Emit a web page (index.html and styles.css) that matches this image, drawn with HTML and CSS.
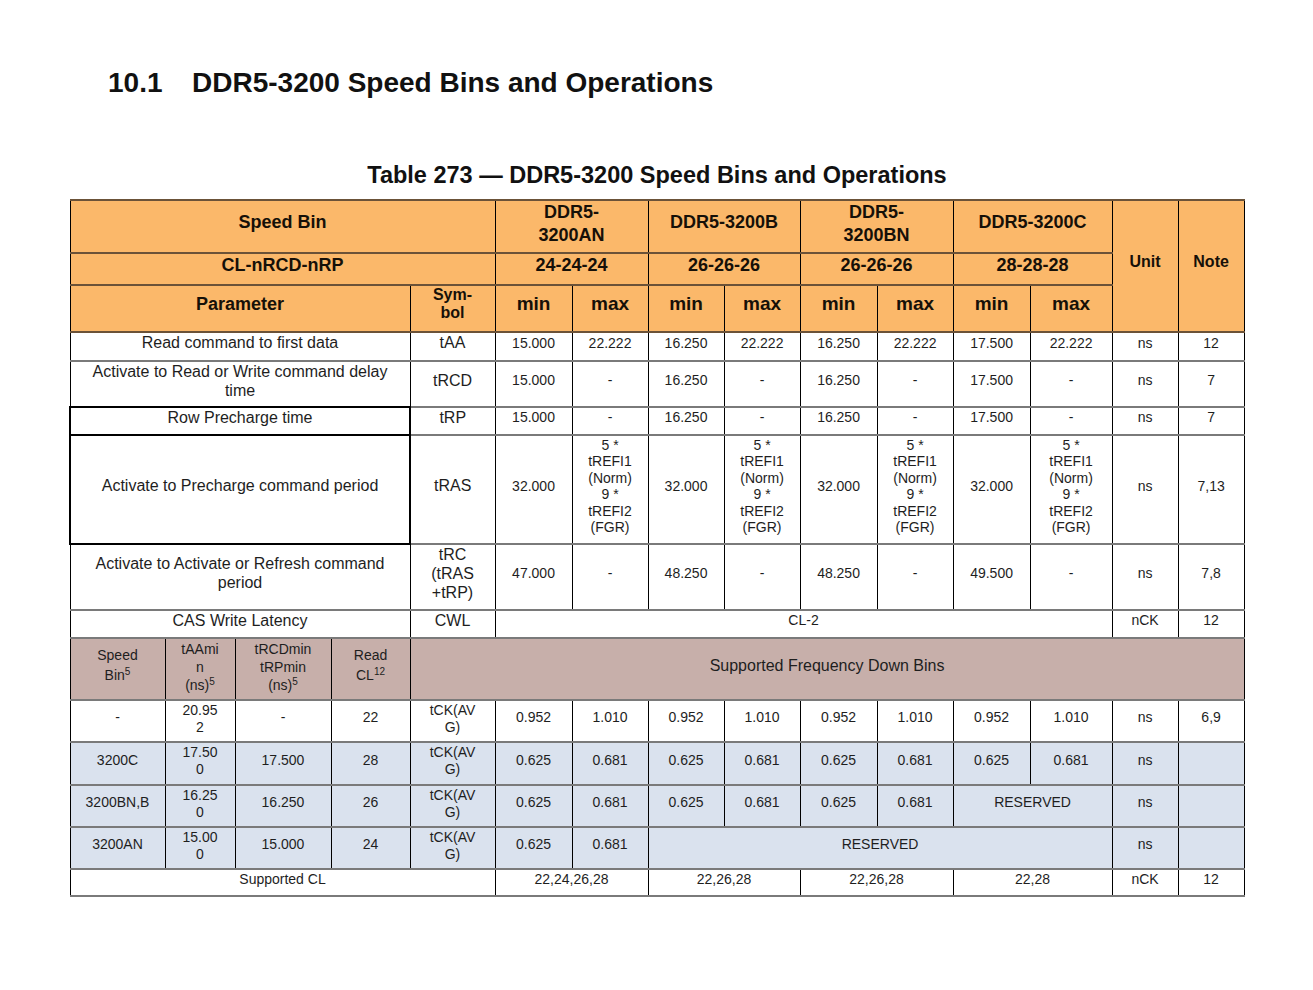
FILE: index.html
```
<!DOCTYPE html>
<html>
<head>
<meta charset="utf-8">
<link rel="stylesheet" href="styles.css">
</head>
<body>
<div class="page">
  <h1 class="section-title"><span class="sec-num">10.1</span><span>DDR5-3200 Speed Bins and Operations</span></h1>
  <div class="caption">Table 273 — DDR5-3200 Speed Bins and Operations</div>
  <table class="bins">
    <colgroup>
      <col class="w95"><col class="w70"><col class="w96"><col class="w79">
      <col class="w85">
      <col class="w77"><col class="w76">
      <col class="w76"><col class="w76">
      <col class="w77"><col class="w76">
      <col class="w77"><col class="w82">
      <col class="w66"><col class="w66">
    </colgroup>
    <tr class="h53">
      <th colspan="5">Speed Bin</th>
      <th colspan="2" class="two">DDR5-<br>3200AN</th>
      <th colspan="2">DDR5-3200B</th>
      <th colspan="2" class="two">DDR5-<br>3200BN</th>
      <th colspan="2">DDR5-3200C</th>
      <th rowspan="3" class="small-hd">Unit</th>
      <th rowspan="3" class="small-hd">Note</th>
    </tr>
    <tr class="h32 hd-thin">
      <th colspan="5">CL-nRCD-nRP</th>
      <th colspan="2">24-24-24</th>
      <th colspan="2">26-26-26</th>
      <th colspan="2">26-26-26</th>
      <th colspan="2">28-28-28</th>
    </tr>
    <tr class="h47">
      <th colspan="4">Parameter</th>
      <th class="small-hd">Sym-<br>bol</th>
      <th class="mm">min</th><th class="mm">max</th>
      <th class="mm">min</th><th class="mm">max</th>
      <th class="mm">min</th><th class="mm">max</th>
      <th class="mm">min</th><th class="mm">max</th>
    </tr>
    <tr class="h29">
      <td colspan="4" class="lg">Read command to first data</td>
      <td class="lg">tAA</td>
      <td>15.000</td><td>22.222</td><td>16.250</td><td>22.222</td><td>16.250</td><td>22.222</td><td>17.500</td><td>22.222</td>
      <td>ns</td><td>12</td>
    </tr>
    <tr class="h46">
      <td colspan="4" class="lg2 bb-black">Activate to Read or Write command delay<br>time</td>
      <td class="lg">tRCD</td>
      <td>15.000</td><td>-</td><td>16.250</td><td>-</td><td>16.250</td><td>-</td><td>17.500</td><td>-</td>
      <td>ns</td><td>7</td>
    </tr>
    <tr class="h28">
      <td colspan="4" class="lg thick">Row Precharge time</td>
      <td class="lg">tRP</td>
      <td>15.000</td><td>-</td><td>16.250</td><td>-</td><td>16.250</td><td>-</td><td>17.500</td><td>-</td>
      <td>ns</td><td>7</td>
    </tr>
    <tr class="h109">
      <td colspan="4" class="lg thick">Activate to Precharge command period</td>
      <td class="lg">tRAS</td>
      <td>32.000</td><td class="tight">5 *<br>tREFI1<br>(Norm)<br>9 *<br>tREFI2<br>(FGR)</td>
      <td>32.000</td><td class="tight">5 *<br>tREFI1<br>(Norm)<br>9 *<br>tREFI2<br>(FGR)</td>
      <td>32.000</td><td class="tight">5 *<br>tREFI1<br>(Norm)<br>9 *<br>tREFI2<br>(FGR)</td>
      <td>32.000</td><td class="tight">5 *<br>tREFI1<br>(Norm)<br>9 *<br>tREFI2<br>(FGR)</td>
      <td>ns</td><td>7,13</td>
    </tr>
    <tr class="h66">
      <td colspan="4" class="lg2 pb8">Activate to Activate or Refresh command<br>period</td>
      <td class="lg2 pb7">tRC<br>(tRAS<br>+tRP)</td>
      <td>47.000</td><td>-</td><td>48.250</td><td>-</td><td>48.250</td><td>-</td><td>49.500</td><td>-</td>
      <td>ns</td><td>7,8</td>
    </tr>
    <tr class="h28">
      <td colspan="4" class="lg">CAS Write Latency</td>
      <td class="lg">CWL</td>
      <td colspan="8">CL-2</td>
      <td>nCK</td><td>12</td>
    </tr>
    <tr class="mauve h62">
      <td class="m2">Speed<br>Bin<sup>5</sup></td>
      <td class="m3">tAAmi<br>n<br>(ns)<sup>5</sup></td>
      <td class="m3">tRCDmin<br>tRPmin<br>(ns)<sup>5</sup></td>
      <td class="m2">Read<br>CL<sup>12</sup></td>
      <td colspan="11" class="lg">Supported Frequency Down Bins</td>
    </tr>
    <tr class="h42">
      <td>-</td><td class="w2">20.95<br>2</td><td>-</td><td>22</td><td class="w2">tCK(AV<br>G)</td>
      <td>0.952</td><td>1.010</td><td>0.952</td><td>1.010</td><td>0.952</td><td>1.010</td><td>0.952</td><td>1.010</td>
      <td>ns</td><td>6,9</td>
    </tr>
    <tr class="blue h43">
      <td>3200C</td><td class="w2">17.50<br>0</td><td>17.500</td><td>28</td><td class="w2">tCK(AV<br>G)</td>
      <td>0.625</td><td>0.681</td><td>0.625</td><td>0.681</td><td>0.625</td><td>0.681</td><td>0.625</td><td>0.681</td>
      <td>ns</td><td></td>
    </tr>
    <tr class="blue h42">
      <td>3200BN,B</td><td class="w2">16.25<br>0</td><td>16.250</td><td>26</td><td class="w2">tCK(AV<br>G)</td>
      <td>0.625</td><td>0.681</td><td>0.625</td><td>0.681</td><td>0.625</td><td>0.681</td>
      <td colspan="2">RESERVED</td>
      <td>ns</td><td></td>
    </tr>
    <tr class="blue h42">
      <td>3200AN</td><td class="w2">15.00<br>0</td><td>15.000</td><td>24</td><td class="w2">tCK(AV<br>G)</td>
      <td>0.625</td><td>0.681</td>
      <td colspan="6">RESERVED</td>
      <td>ns</td><td></td>
    </tr>
    <tr class="h27">
      <td colspan="5">Supported CL</td>
      <td colspan="2">22,24,26,28</td>
      <td colspan="2">22,26,28</td>
      <td colspan="2">22,26,28</td>
      <td colspan="2">22,28</td>
      <td>nCK</td><td>12</td>
    </tr>
  </table>
</div>
</body>
</html>
```
FILE: styles.css
```
html, body {
  margin: 0;
  padding: 0;
  background: #ffffff;
}

.page {
  font-family: "Liberation Sans", Arial, sans-serif;
  color: #1e1e1e;
  padding-top: 66px;
}

.section-title {
  margin: 0 0 0 108px;
  font-size: 28px;
  line-height: 34px;
  font-weight: bold;
  color: #111;
  display: flex;
}

.sec-num {
  width: 84px;
}

.caption {
  margin-top: 61px;
  width: 1174px;
  margin-left: 70px;
  text-align: center;
  font-size: 23.5px;
  line-height: 28px;
  font-weight: bold;
  color: #111;
}

.bins {
  margin-top: 10px;
  margin-left: 69px;
  width: 1174px;
  table-layout: fixed;
  border-collapse: collapse;
  font-size: 14px;
  line-height: 17px;
}

.w95 { width: 95px; }
.w70 { width: 70px; }
.w96 { width: 96px; }
.w79 { width: 79px; }
.w85 { width: 85px; }
.w77 { width: 77px; }
.w76 { width: 76px; }
.w82 { width: 82px; }
.w66 { width: 66px; }

.bins td, .bins th {
  padding: 0 3px 7px;
  text-align: center;
  vertical-align: middle;
  border-left: 1px solid #000;
  border-right: 1px solid #000;
  border-top: 2px solid #7a7a7a;
  border-bottom: 2px solid #7a7a7a;
  overflow: hidden;
}

.bins th {
  background: #fbb86a;
  font-size: 18px;
  line-height: 24px;
  font-weight: bold;
  color: #161008;
  border-top: 2px solid #6b5238;
  border-bottom: 2px solid #6b5238;
  padding-bottom: 9px;
}

.bins .hd-thin th {
  line-height: 20px;
  padding-bottom: 8px;
}

.bins th.two {
  line-height: 23px;
  padding-bottom: 5px;
}

.bins th.small-hd {
  font-size: 16px;
  line-height: 18px;
}

.bins th.mm {
  font-size: 19px;
}

.bins td.lg {
  font-size: 16px;
  line-height: 18px;
}

.bins td.lg2 {
  font-size: 16px;
  line-height: 19px;
  padding-bottom: 6px;
}

.bins td.pb7 { padding-bottom: 7px; }
.bins td.pb8 { padding-bottom: 8px; }

.bins td.tight {
  line-height: 16.5px;
}

.bins td.thick {
  border: 2px solid #000;
}

.bins td.bb-black {
  border-bottom: 2px solid #000;
}

.bins td.m2 {
  line-height: 20px;
  padding-bottom: 8px;
}

.bins td.m3 {
  line-height: 18px;
  padding-bottom: 5px;
}

.bins td.w2 {
  line-height: 17px;
  padding-bottom: 5px;
}

.bins sup {
  font-size: 10px;
  line-height: 0;
  vertical-align: 5px;
}

.mauve td {
  background: #c7afaa;
}

.blue td {
  background: #dae2ee;
}

.h27 { height: 27px; }
.h28 { height: 28px; }
.h29 { height: 29px; }
.h32 { height: 32px; }
.h42 { height: 42px; }
.h43 { height: 43px; }
.h46 { height: 46px; }
.h47 { height: 47px; }
.h53 { height: 53px; }
.h62 { height: 62px; }
.h66 { height: 66px; }
.h109 { height: 109px; }
```
